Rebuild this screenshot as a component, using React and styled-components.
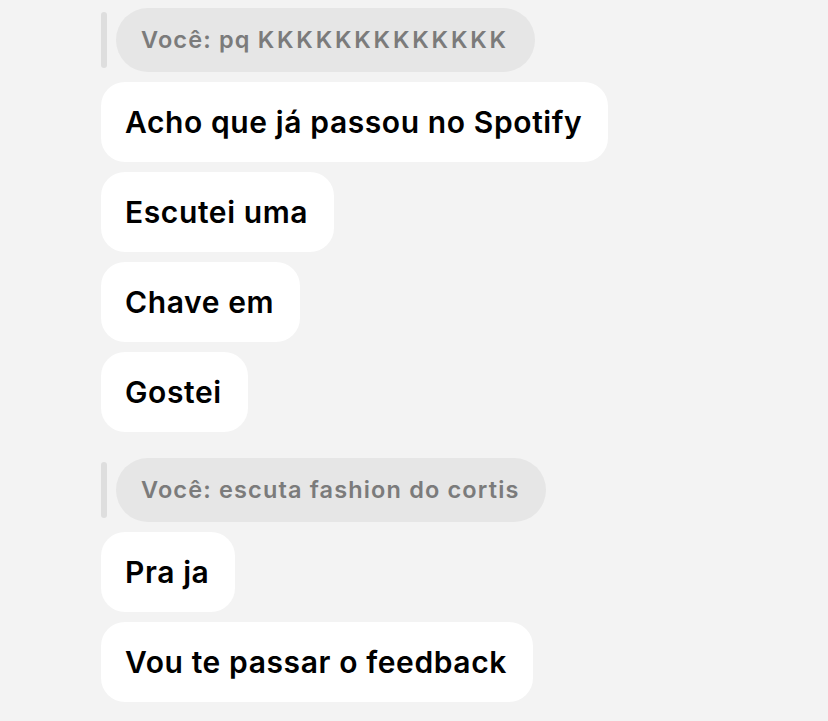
import React from 'react';
import styled, { createGlobalStyle } from 'styled-components';

const GlobalStyle = createGlobalStyle`
  html, body {
    margin: 0;
    padding: 0;
    background: #f3f3f3;
  }
  body {
    font-family: Inter, "Liberation Sans", sans-serif;
  }
`;

const Page = styled.div`
  width: 828px;
  height: 721px;
  overflow: hidden;
  background: #f3f3f3;
  padding: 8px 0 0 101px;
  box-sizing: border-box;
  display: flex;
  flex-direction: column;
`;

const Group = styled.div`
  display: flex;
  flex-direction: column;
  align-items: flex-start;
  gap: 10px;
  margin-bottom: ${p => p.$after || 0}px;
`;

const Reply = styled.div`
  display: flex;
  align-items: center;
  gap: 9px;
`;

const ReplyBar = styled.div`
  width: 6px;
  height: 56px;
  border-radius: 3px;
  background: #dedede;
`;

const ReplyBubble = styled.div`
  height: 64px;
  line-height: 64px;
  padding: 0 26px 0 25px;
  border-radius: 32px;
  background: #e6e6e6;
  color: #7b7b7b;
  font-size: 23.5px;
  font-weight: 600;
  letter-spacing: 1.15px;
  white-space: nowrap;
`;

// SF's K is a lot wider than Inter's
const Laugh = styled.span`
  letter-spacing: 2.8px;
`;

const Bubble = styled.div`
  height: 80px;
  padding: 0 26px 0 24px;
  border-radius: 24px;
  background: #ffffff;
  color: #000;
  font-size: 30px;
  font-weight: 600;
  letter-spacing: 0.6px;
  display: flex;
  align-items: center;
  white-space: nowrap;
`;

const threads = [
  {
    quote: ['Você: pq ', 'KKKKKKKKKKKKK'],
    messages: ['Acho que já passou no Spotify', 'Escutei uma', 'Chave em', 'Gostei'],
  },
  {
    quote: ['Você: escuta fashion do cortis'],
    messages: ['Pra ja', 'Vou te passar o feedback'],
  },
];

const App = () =>
  <Page>
    <GlobalStyle />
    {threads.map((t, i) =>
      <Group key={i} $after={i === 0 ? 26 : 0}>
        <Reply>
          <ReplyBar />
          <ReplyBubble>
            {t.quote[0]}
            {t.quote[1] && <Laugh>{t.quote[1]}</Laugh>}
          </ReplyBubble>
        </Reply>
        {t.messages.map((m, j) => <Bubble key={j}>{m}</Bubble>)}
      </Group>
    )}
  </Page>

export default App;
